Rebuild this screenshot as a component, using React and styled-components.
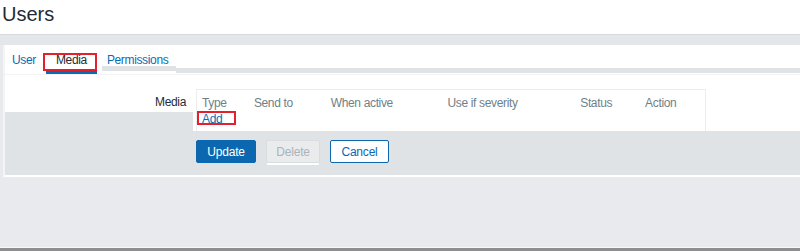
import React from "react";
import styled, { createGlobalStyle } from "styled-components";

const GlobalStyle = createGlobalStyle`
    html, body {
        margin: 0;
        padding: 0;
        background: #e8eaed;
        font-family: "Liberation Sans", Arial, sans-serif;
    }
`;

const columns = [
    { label: "Type", width: 52 },
    { label: "Send to", width: 77 },
    { label: "When active", width: 117 },
    { label: "Use if severity", width: 133 },
    { label: "Status", width: 65 },
    { label: "Action", width: 60 },
];

function App() {
    return (
        <Page>
            <GlobalStyle />
            <Header>
                <Title>Users</Title>
            </Header>
            <Main>
                <Panel>
                    <TabBar>
                        <Tab $pl={7} $pr={10}>User</Tab>
                        <Tab $active $pl={10} $pr={10}>
                            Media
                            <Highlight $left={-3} $width={54} $top={8} $height={18} />
                        </Tab>
                        <Tab $pl={5} $pr={8} $strip>Permissions</Tab>
                        <Filler />
                    </TabBar>
                    <FormGrid>
                        <LabelCell>
                            <Label>Media</Label>
                        </LabelCell>
                        <ContentCell>
                            <MediaTable>
                                <HeaderRow>
                                    {columns.map((c) => (
                                        <HeadCell key={c.label} $w={c.width}>
                                            {c.label}
                                        </HeadCell>
                                    ))}
                                </HeaderRow>
                                <AddLink>
                                    Add
                                    <Highlight $left={-5} $width={39} $top={-1} $height={14} />
                                </AddLink>
                            </MediaTable>
                        </ContentCell>
                        <ButtonRow>
                            <Button $variant="primary" $w={60}>Update</Button>
                            <Button $variant="disabled" $w={54}>Delete</Button>
                            <Button $variant="outline" $w={59}>Cancel</Button>
                        </ButtonRow>
                    </FormGrid>
                </Panel>
            </Main>
            <Footer />
        </Page>
    );
}

const Page = styled.div`
    height: 251px;
    display: flex;
    flex-direction: column;
    background: #e8eaed;
    overflow: hidden;
`;
const Header = styled.div`
    height: 35px;
    background: #fff;
    padding-left: 2px;
    border-bottom: 1px solid #d6dade;
    box-sizing: border-box;
`;
const Title = styled.h1`
    margin: 0;
    font-size: 20px;
    font-weight: normal;
    line-height: 28px;
    color: #1f2c33;
`;
const Main = styled.div`
    flex: 1;
    padding: 10px 0 0 3px;
    background: linear-gradient(#e4e7ea 0 10px, #e8eaed 10px);
`;
const Panel = styled.div`
    background: #fff;
    border-left: 2px solid #f3f4f5;
    border-bottom: 2px solid #fff;
`;
const TabBar = styled.div`
    height: 30px;
    display: flex;
    align-items: stretch;
    border-bottom: 1px solid #f2f3f4;
    box-sizing: border-box;
`;
const Tab = styled.div`
    position: relative;
    display: flex;
    align-items: center;
    padding: 3px ${(p) => p.$pr}px 0 ${(p) => p.$pl}px;
    margin-left: ${(p) => (p.$strip ? 5 : 0)}px;
    font-size: 12px;
    letter-spacing: -0.35px;
    color: ${(p) => (p.$active ? "#1f2c33" : "#0a6cb4")};
    border-bottom: 3px solid ${(p) => (p.$active ? "#0a6cb4" : "transparent")};
    box-shadow: ${(p) => (p.$strip ? "inset 0 -6px 0 -1px #e0e3e6" : "none")};
`;
const Filler = styled.div`
    flex: 1;
    align-self: flex-end;
    height: 5px;
    margin-bottom: 1px;
    background: #e0e3e6;
`;
const Highlight = styled.span`
    position: absolute;
    left: ${(p) => p.$left}px;
    width: ${(p) => p.$width}px;
    top: ${(p) => p.$top}px;
    height: ${(p) => p.$height}px;
    border: 2px solid #e3202b;
    box-sizing: border-box;
    pointer-events: none;
`;
const FormGrid = styled.div`
    display: grid;
    grid-template-columns: 188px 1fr;
    background: #e0e3e6;
`;
const LabelCell = styled.div`
    height: 37px;
    background: #fff;
    display: flex;
    justify-content: flex-end;
    padding: 20px 7px 0 0;
    box-sizing: border-box;
`;
const Label = styled.span`
    font-size: 12px;
    letter-spacing: -0.35px;
    line-height: 14px;
    color: #1f2c33;
`;
const ContentCell = styled.div`
    background: #fff;
    padding: 14px 0 0 3px;
`;
const MediaTable = styled.div`
    width: 510px;
    height: 42px;
    border: 1px solid #ebeef0;
    border-bottom: none;
    box-sizing: border-box;
    padding: 6px 0 0 5px;
    font-size: 12px;
    line-height: 14px;
    letter-spacing: -0.35px;
`;
const HeaderRow = styled.div`
    display: flex;
`;
const HeadCell = styled.div`
    width: ${(p) => p.$w}px;
    color: #6f7f89;
    white-space: nowrap;
`;
const AddLink = styled.div`
    position: relative;
    width: fit-content;
    margin-top: 2px;
    color: #0a6cb4;
`;
const ButtonRow = styled.div`
    grid-column: 2;
    display: flex;
    gap: 10px;
    padding: 9px 0 12px 3px;
`;
const variants = {
    primary: "background: #0b67b0; color: #fff; border-color: #0b67b0;",
    disabled:
        "background: #e9ebed; color: #a9b4bb; border-color: #d8dde0; box-shadow: 0 3px 0 -1px #fff;",
    outline: "background: #fff; color: #0b67b0; border-color: #0b67b0;",
};
const Button = styled.button`
    width: ${(p) => p.$w}px;
    height: 23px;
    padding: 0;
    border: 1px solid;
    border-radius: 2px;
    font-family: inherit;
    font-size: 12px;
    letter-spacing: -0.2px;
    text-align: center;
    ${(p) => variants[p.$variant]}
`;
const Footer = styled.div`
    height: 3px;
    border-top: 1px solid #f6f7f8;
    background: #8e8e8e;
`;

export default App;
